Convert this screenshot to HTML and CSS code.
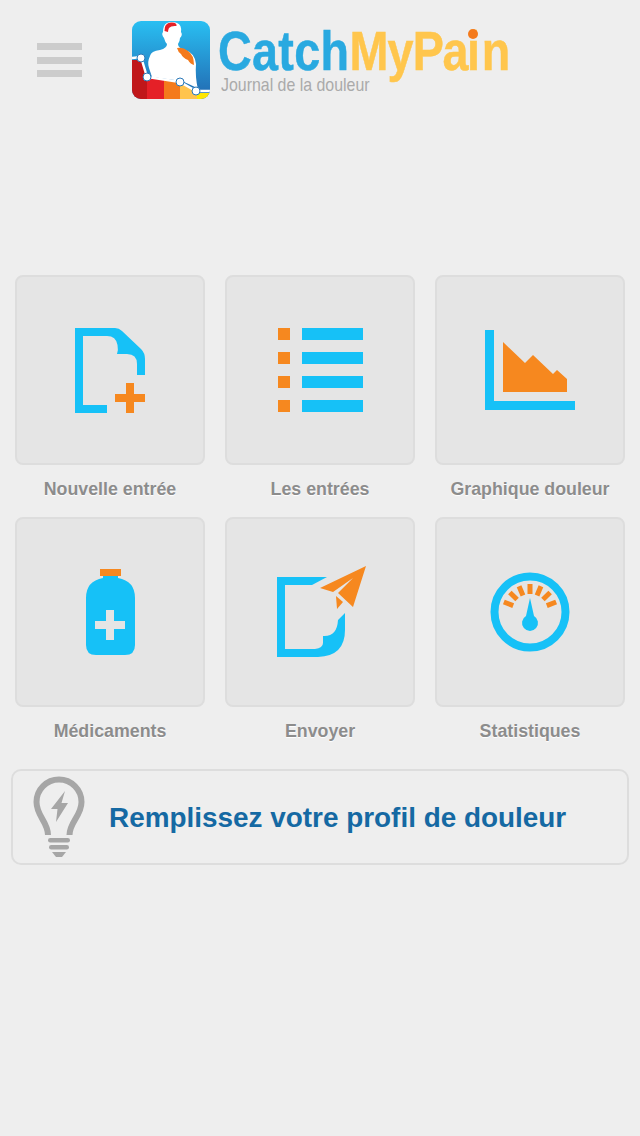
FILE: index.html
```html
<!DOCTYPE html>
<html lang="fr">
<head>
<meta charset="UTF-8">
<title>CatchMyPain</title>
<link rel="stylesheet" href="styles.css">
</head>
<body>
<header class="top">
	<div class="burger"><span></span><span></span><span></span></div>
	<svg class="logo" viewBox="132 21 78 78">
		<defs>
			<linearGradient id="sky" x1="0" y1="0" x2="0" y2="1">
				<stop offset="0" stop-color="#29bff2"/>
				<stop offset="1" stop-color="#2268b0"/>
			</linearGradient>
			<clipPath id="corner"><rect x="132" y="21" width="78" height="78" rx="9"/></clipPath>
		</defs>
		<g clip-path="url(#corner)">
			<rect x="132" y="21" width="78" height="78" fill="url(#sky)"/>
			<path d="M132 60 L141 60 L147 77 L147 99 L132 99Z" fill="#c0171a"/>
			<path d="M147 77 L164 79 L164 99 L147 99Z" fill="#e52027"/>
			<path d="M164 79 L180 82 L180 99 L164 99Z" fill="#f47a1c"/>
			<path d="M180 82 L197 91 L197 99 L180 99Z" fill="#ffc44d"/>
			<path d="M197 93 L211 93 L211 99 L197 99Z" fill="#ffe600"/>
			<path d="M167 23 Q163 25 163 32 Q161 34 164 38 Q165 42 167 44 Q167 48 160 50 Q151 51 150 56 Q147 62 149 68 L152 77 L182 81 L195 87 L198 90 Q195 76 196 64 Q195 53 185 50 Q178 48 178 44 Q180 41 180 38 Q183 35 181 32 Q182 25 177 23 Q172 21 167 23Z" fill="#fff"/>
			<path d="M164.500 31 Q164 23 171 22.500 Q177 22 176.500 26 Q171 25.500 169 28 Q168 30 168 32Z" fill="#e52027"/>
			<path d="M177 48 Q183 47 188 51 Q194 55 194 65 Q190 64 188 60 Q183 58 181 54 Q178 52 177 48Z" fill="#f47a1c"/>
			<path d="M132 58 L141 57 L147 77 L180 82 L196 91 L211 91" fill="none" stroke="#fff" stroke-width="2.500"/>
			<g fill="#fff" stroke="#2a78b8" stroke-width="1">
				<circle cx="141" cy="58" r="4"/>
				<circle cx="147" cy="77" r="4"/>
				<circle cx="180" cy="82" r="4"/>
				<circle cx="196" cy="91" r="4"/>
			</g>
		</g>
	</svg>
	<div class="brand">
		<div class="brand-name"><span class="catch">Catch</span><span class="mypain"><span class="my">My</span><span class="pa">Pa</span><span class="ii">i</span>n</span></div>
		<div class="brand-sub">Journal de la douleur</div>
	</div>
	<i class="i-dot"></i>
</header>

<main class="menu">
	<a class="item">
		<div class="tile">
			<svg viewBox="17 277 186 186">
				<path class="blue" d="M75 328 H115 Q119 328 122 331 L141 349 Q145 353 145 359 V375 H137 V364 Q137 354 127 354 H117 Q118.500 350 117.500 345 Q116 336 107 336 H83 V405 H107 V413 H75Z"/>
				<path class="orange" d="M126 383 H134 V394 H145 V402 H134 V413 H126 V402 H115 V394 H126Z"/>
			</svg>
		</div>
		<p>Nouvelle entrée</p>
	</a>
	<a class="item">
		<div class="tile">
			<svg viewBox="227 277 186 186">
				<path class="orange" d="M278 328 h12 v12 h-12Z M278 352 h12 v12 h-12Z M278 376 h12 v12 h-12Z M278 400 h12 v12 h-12Z"/>
				<path class="blue" d="M302 328 h61 v12 h-61Z M302 352 h61 v12 h-61Z M302 376 h61 v12 h-61Z M302 400 h61 v12 h-61Z"/>
			</svg>
		</div>
		<p>Les entrées</p>
	</a>
	<a class="item">
		<div class="tile">
			<svg viewBox="437 277 186 186">
				<path class="blue" d="M485 330 H494 V401 H575 V410 H485Z"/>
				<path class="orange" d="M503 342 L525 363 L533 355 L553 374 L557 370 L567 379 V392 H503Z"/>
			</svg>
		</div>
		<p>Graphique douleur</p>
	</a>
	<a class="item">
		<div class="tile">
			<svg viewBox="17 519 186 186">
				<rect class="orange" x="100" y="569" width="21" height="7"/>
				<path class="blue" d="M103 576 H118 V578 Q135 581 135 598 V645 Q135 655 125 655 H96 Q86 655 86 645 V598 Q86 581 103 578Z"/>
				<path class="hole" d="M106 610 H114 V621 H125 V629 H114 V640 H106 V629 H95 V621 H106Z"/>
			</svg>
		</div>
		<p>Médicaments</p>
	</a>
	<a class="item">
		<div class="tile">
			<svg viewBox="227 519 186 186">
				<path class="blue" d="M277 577 H327 L312 585 H285 V649 H315 Q323 648 323 643 V636 Q337 637 338 620 L345 613 V630 Q345 656 318 657 H277Z"/>
				<path class="orange" d="M366 566 L353 607 L338 593 L353 578 L333 592 L320 588Z"/>
				<path class="orange" d="M336 596 L343 602 L337 609Z"/>
			</svg>
		</div>
		<p>Envoyer</p>
	</a>
	<a class="item">
		<div class="tile">
			<svg viewBox="437 519 186 186">
				<circle cx="530" cy="612" r="35.500" fill="none" stroke="#16c1f7" stroke-width="8"/>
				<g class="orange" transform="translate(530 612)">
					<rect x="-2.500" y="-28" width="5" height="10" transform="rotate(-69)"/>
					<rect x="-2.500" y="-28" width="5" height="10" transform="rotate(-46)"/>
					<rect x="-2.500" y="-28" width="5" height="10" transform="rotate(-23)"/>
					<rect x="-2.500" y="-28" width="5" height="10"/>
					<rect x="-2.500" y="-28" width="5" height="10" transform="rotate(23)"/>
					<rect x="-2.500" y="-28" width="5" height="10" transform="rotate(46)"/>
					<rect x="-2.500" y="-28" width="5" height="10" transform="rotate(69)"/>
				</g>
				<path class="blue" d="M530 598 L534 616 A8 8 0 1 1 526 616Z"/>
			</svg>
		</div>
		<p>Statistiques</p>
	</a>
</main>

<a class="tip">
	<svg class="bulb" viewBox="30 773 60 88">
		<path d="M48 835 C48 822 36.500 816 36.500 802 A22.500 22.500 0 0 1 81.500 802 C81.500 816 69.500 822 69.500 835" fill="none" stroke="#a6a6a6" stroke-width="6"/>
		<path d="M65 791 L51 809 H57.500 L56 822 L68 803 H61.500Z" fill="#a6a6a6"/>
		<rect x="48" y="838" width="22" height="4.500" rx="2.200" fill="#a6a6a6"/>
		<rect x="49" y="845" width="20" height="4.500" rx="2.200" fill="#a6a6a6"/>
		<path d="M52 852 H66 L62 857 H56Z" fill="#a6a6a6"/>
	</svg>
	<span>Remplissez votre profil de douleur</span>
</a>
</body>
</html>
```
FILE: styles.css
```css
*{margin:0;padding:0;box-sizing:border-box;}
body{background:#eee;font-family:"Liberation Sans",Arial,sans-serif;}
svg{display:block;}

.top{display:flex;align-items:flex-start;height:99px;padding-top:21px;position:relative;}
.burger{width:45px;height:34px;margin:22px 50px 0 37px;display:flex;flex-direction:column;justify-content:space-between;}
.burger span{display:block;height:7px;background:#ccc;}
.logo{width:78px;height:78px;}
.brand{margin-left:8px;}
.brand-name{font-size:56px;font-weight:bold;line-height:56px;margin-top:2px;white-space:nowrap;transform:scaleX(.834);transform-origin:left;-webkit-text-stroke:.5px;}
.catch{color:#29a9e0;letter-spacing:.4px;}
.mypain{color:#ffc64d;}
.my{letter-spacing:-1px;}
.pa{letter-spacing:-1.600px;}
.ii{letter-spacing:2px;}
.i-dot{position:absolute;left:468px;top:29px;width:10px;height:10px;border-radius:50%;background:#f47a1c;}
.brand-sub{font-size:18.500px;line-height:20px;margin:-4px 0 0 3px;color:#aaa;white-space:nowrap;transform:scaleX(.86);transform-origin:left;}

.menu{display:grid;grid-template-columns:repeat(3,190px);column-gap:20px;padding:0 15px;margin-top:176px;}
.item{display:block;height:242px;}
.tile{width:190px;height:190px;background:#e5e5e5;border:2px solid #ddd;border-radius:8px;}
.item p{margin-top:14px;text-align:center;font-size:17.800px;font-weight:bold;line-height:20px;color:#8c8c8c;text-shadow:0 1px 1px #fff;}
.blue{fill:#16c1f7;}
.orange{fill:#f6881f;}
.hole{fill:#e5e5e5;}

.tip{display:flex;align-items:center;height:96px;margin:10px 11px 0;border:2px solid #ddd;border-radius:10px;padding-left:17px;}
.bulb{width:60px;height:88px;flex:none;}
.tip span{margin-left:19px;font-size:27.900px;font-weight:bold;line-height:34px;padding-top:1px;color:#1569a3;white-space:nowrap;}
```
